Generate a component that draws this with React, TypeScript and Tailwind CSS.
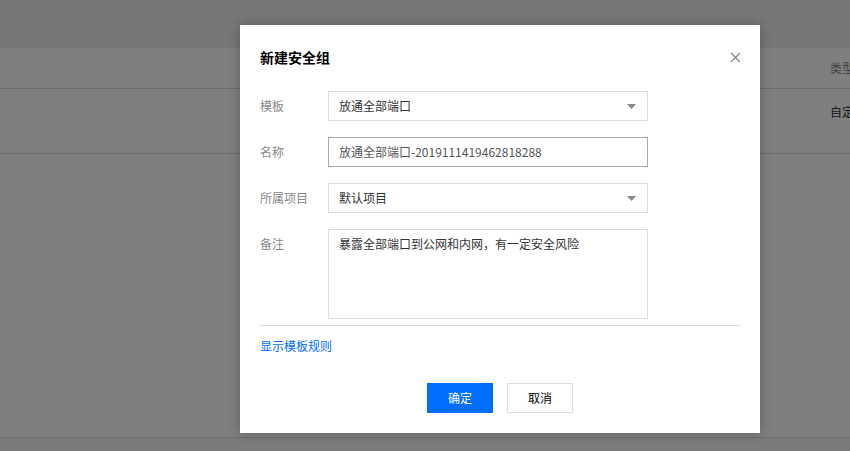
import React from "react";

const font = { fontFamily: '"Noto Sans CJK SC", "Noto Sans", sans-serif' };

function Arrow() {
  return (
    <svg width="9" height="5" viewBox="0 0 9 5" className="shrink-0">
      <path d="M0 0 H9 L4.5 5 Z" fill="#888" />
    </svg>
  );
}

function Row({ label, children }: { label: string; children: React.ReactNode }) {
  return (
    <div className="flex items-start">
      <div className="w-[68px] shrink-0 h-[30px] flex items-center text-[12px] text-[#888]">{label}</div>
      {children}
    </div>
  );
}

export default function App() {
  return (
    <div className="relative w-[850px] h-[451px] overflow-hidden bg-white" style={font}>
      {/* underlying page */}
      <div className="flex flex-col h-full">
        <div className="h-[48px] bg-[#eeeeee] shrink-0" />
        <div className="h-[41px] border-b border-[#dddddd] flex items-center justify-end shrink-0">
          <span className="text-[12px] text-[#888] w-[20px] overflow-hidden whitespace-nowrap">类型</span>
        </div>
        <div className="h-[65px] border-b border-[#dddddd] flex items-start justify-end pt-[14px] shrink-0">
          <span className="text-[12px] text-[#333] w-[20px] overflow-hidden whitespace-nowrap">自定义</span>
        </div>
        <div className="flex-1 border-b border-[#dddddd]" />
        <div className="h-[13px] bg-[#f6f6f6] shrink-0" />
      </div>
      {/* overlay */}
      <div className="absolute inset-0 bg-black/50" />
      {/* modal */}
      <div className="absolute left-[240px] top-[25px] w-[520px] bg-white shadow-[0_0_12px_rgba(0,0,0,0.25)] px-5 pt-[22px] pb-5">
        <div className="flex items-center justify-between h-[20px]">
          <span className="text-[14px] font-bold text-[#000]">新建安全组</span>
          <svg width="11" height="11" viewBox="0 0 11 11" className="-mr-[1px]">
            <path d="M1 1 L10 10 M10 1 L1 10" stroke="#888" strokeWidth="1.3" />
          </svg>
        </div>
        <div className="mt-[24px] flex flex-col gap-4">
          <Row label="模板">
            <div className="w-[320px] h-[30px] border border-[#dddddd] flex items-center justify-between pl-[10px] pr-[11px] text-[12px] text-[#333]">
              <span>放通全部端口</span>
              <Arrow />
            </div>
          </Row>
          <Row label="名称">
            <div className="w-[320px] h-[30px] border border-[#aaaaaa] flex items-center pl-[10px] text-[12px] text-[#555]">
              放通全部端口-2019111419462818288
            </div>
          </Row>
          <Row label="所属项目">
            <div className="w-[320px] h-[30px] border border-[#dddddd] flex items-center justify-between pl-[10px] pr-[11px] text-[12px] text-[#333]">
              <span>默认项目</span>
              <Arrow />
            </div>
          </Row>
          <Row label="备注">
            <div className="w-[320px] h-[90px] border border-[#dddddd] pl-[10px] pt-[4px] text-[12px] text-[#333] leading-[20px]">
              暴露全部端口到公网和内网，有一定安全风险
            </div>
          </Row>
        </div>
        <div className="mt-[6px] border-t border-[#dddddd]" />
        <div className="mt-[11px] text-[12px] text-[#006eff] leading-[18px]">显示模板规则</div>
        <div className="mt-[28px] flex justify-center gap-[14px]">
          <button className="w-[66px] h-[30px] bg-[#006eff] text-white text-[12px]">确定</button>
          <button className="w-[66px] h-[30px] bg-white border border-[#dddddd] text-[#000] text-[12px]">取消</button>
        </div>
      </div>
    </div>
  );
}
